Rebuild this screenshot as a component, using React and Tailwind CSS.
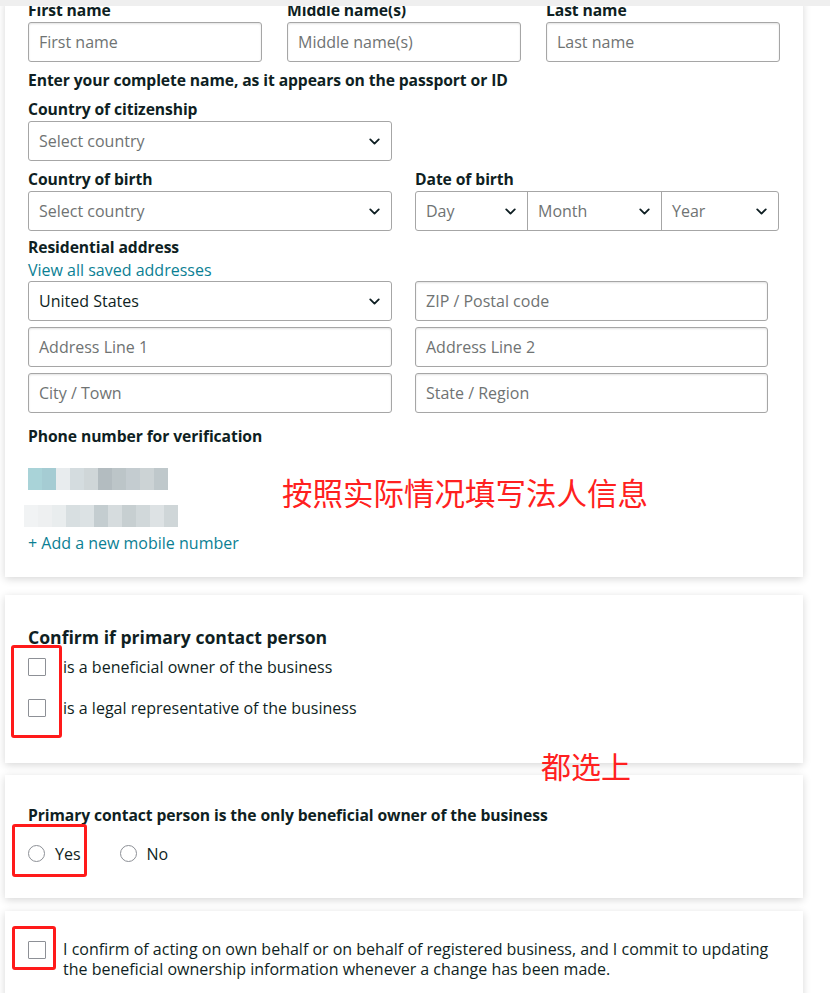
import { ChevronDown } from 'lucide-react';

const font = { fontFamily: '"Open Sans", "Noto Sans CJK SC", sans-serif' };

function Label({ children, className = '' }) {
  return <div className={`h-5 leading-5 text-[15.7px] font-bold text-[#0f1f23] tracking-[-0.1px] ${className}`}>{children}</div>;
}

function Input({ placeholder, className = '' }) {
  return (
    <div className={`h-10 rounded-[3px] border border-[#a6a6a6] shadow-[inset_0_1px_2px_rgba(15,17,17,0.12)] flex items-center pl-[10px] text-[16px] text-[#6f7373] ${className}`}>
      {placeholder}
    </div>
  );
}

function Select({ value, muted = true, className = '' }) {
  return (
    <div className={`h-10 rounded-[3px] border border-[#a6a6a6] flex items-center justify-between pl-[10px] pr-[8px] text-[16px] ${muted ? 'text-[#6f7373]' : 'text-[#0f1f23]'} ${className}`}>
      <span>{value}</span>
      <ChevronDown size={17} strokeWidth={2.6} className="text-[#0f1f23]" />
    </div>
  );
}

function Checkbox() {
  return <div className="w-[18px] h-[18px] border border-[#8d9096] rounded-[1px] bg-white shrink-0" />;
}

function Radio() {
  return <div className="w-[17px] h-[17px] border border-[#8d9096] rounded-full bg-white shrink-0" />;
}

function Blur({ cells }) {
  return (
    <div className="flex h-[22px] blur-[0.6px]">
      {cells.map((c, i) => (
        <div key={i} className="w-[14px] h-full" style={{ background: c }} />
      ))}
    </div>
  );
}

const card = 'ml-[5px] w-[798px] bg-white shadow-[0_2px_8px_rgba(0,0,0,0.16)] relative';
const cjk = { fontFamily: '"Noto Sans CJK SC", sans-serif' };

export default function App() {
  return (
    <div className="relative w-[831px] h-[993px] overflow-hidden bg-white" style={font}>
      <div className="absolute top-0 left-0 w-[830px] h-[6px] bg-[#efefef] z-10" />

      <div className={`${card} pl-[23px] pr-[24px] pb-6`}>
        <div className="grid grid-cols-[234px_234px_234px] gap-x-[25px]">
          <div>
            <Label>First name</Label>
            <Input placeholder="First name" className="mt-[2px]" />
          </div>
          <div>
            <Label>Middle name(s)</Label>
            <Input placeholder="Middle name(s)" className="mt-[2px]" />
          </div>
          <div>
            <Label>Last name</Label>
            <Input placeholder="Last name" className="mt-[2px]" />
          </div>
        </div>
        <Label className="mt-2">Enter your complete name, as it appears on the passport or ID</Label>
        <Label className="mt-[9px]">Country of citizenship</Label>
        <Select value="Select country" className="mt-[2px] w-[364px]" />

        <div className="mt-2 grid grid-cols-[364px_364px] gap-x-[23px]">
          <div>
            <Label>Country of birth</Label>
            <Select value="Select country" className="mt-[2px]" />
          </div>
          <div>
            <Label>Date of birth</Label>
            <div className="mt-[2px] h-10 rounded-[3px] border border-[#a6a6a6] flex text-[16px] text-[#6f7373]">
              <div className="w-[112px] flex items-center justify-between pl-[10px] pr-[8px] border-r border-[#a6a6a6]">
                <span>Day</span>
                <ChevronDown size={17} strokeWidth={2.6} className="text-[#0f1f23]" />
              </div>
              <div className="w-[134px] flex items-center justify-between pl-[10px] pr-[8px] border-r border-[#a6a6a6]">
                <span>Month</span>
                <ChevronDown size={17} strokeWidth={2.6} className="text-[#0f1f23]" />
              </div>
              <div className="flex-1 flex items-center justify-between pl-[10px] pr-[8px]">
                <span>Year</span>
                <ChevronDown size={17} strokeWidth={2.6} className="text-[#0f1f23]" />
              </div>
            </div>
          </div>
        </div>

        <Label className="mt-[6px]">Residential address</Label>
        <div className="mt-[3px] h-5 leading-5 text-[16px] text-[#0b7f94]">View all saved addresses</div>
        <div className="mt-px grid grid-cols-[364px_353px] gap-x-[23px] gap-y-[6px]">
          <Select value="United States" muted={false} />
          <Input placeholder="ZIP / Postal code" />
          <Input placeholder="Address Line 1" />
          <Input placeholder="Address Line 2" />
          <Input placeholder="City / Town" />
          <Input placeholder="State / Region" />
        </div>

        <Label className="mt-[13px]">Phone number for verification</Label>
        <div className="mt-[22px] flex flex-col gap-[15px]">
          <Blur cells={['#a9d3d8', '#a5ccd3', '#e8ecee', '#d4dcdf', '#cfd6d8', '#b3bcc0', '#bcc5c8', '#c4ccd0', '#ccd3d5', '#bfc8cb']} />
          <div className="-ml-[4px]">
            <Blur cells={['#f1f3f4', '#eef0f1', '#e9edee', '#d8dfe1', '#dce2e4', '#c4cdd0', '#d6dcde', '#c7cfd1', '#d1d8da', '#dde2e4', '#cfd6d8']} />
          </div>
        </div>
        <div className="mt-[6px] h-5 leading-5 text-[16px] text-[#0b7f94]">+ Add a new mobile number</div>

        <div className="absolute left-[277px] top-[474px] text-[30.5px] leading-[36px] text-[#ff2020]" style={cjk}>
          按照实际情况填写法人信息
        </div>
      </div>

      <div className={`${card} mt-[18px] h-[168px] pl-[23px] pt-[30px]`}>
        <div className="h-6 leading-6 text-[17.6px] font-bold text-[#0f1f23]">Confirm if primary contact person</div>
        <div className="mt-[7px] flex items-center gap-[17px] h-[22px]">
          <Checkbox />
          <span className="text-[16px] text-[#0f1f23]">is a beneficial owner of the business</span>
        </div>
        <div className="mt-[19px] flex items-center gap-[17px] h-[22px]">
          <Checkbox />
          <span className="text-[16px] text-[#0f1f23]">is a legal representative of the business</span>
        </div>
        <div className="absolute left-[6px] top-[50px] w-[51px] h-[93px] border-[3px] border-[#ff1a1a] rounded-[3px]" />
      </div>

      <div className="absolute left-[541px] top-[747px] text-[30px] leading-[36px] text-[#ff2020] z-10" style={cjk}>
        都选上
      </div>

      <div className={`${card} mt-[12px] h-[123px] pl-[23px] pt-[30px]`}>
        <Label>Primary contact person is the only beneficial owner of the business</Label>
        <div className="mt-[20px] flex items-center h-[17px]">
          <Radio />
          <span className="ml-[10px] text-[16px] text-[#0f1f23]">Yes</span>
          <div className="ml-[39px]"><Radio /></div>
          <span className="ml-[10px] text-[16px] text-[#0f1f23]">No</span>
        </div>
        <div className="absolute left-[7px] top-[49px] w-[75px] h-[53px] border-[3px] border-[#ff1a1a] rounded-[3px]" />
      </div>

      <div className={`${card} mt-[13px] h-[110px] pl-[23px] pt-[30px]`}>
        <div className="flex gap-[17px]">
          <Checkbox />
          <p className="text-[16px] leading-[20px] text-[#0f1f23] -mt-[2px] whitespace-nowrap">
            I confirm of acting on own behalf or on behalf of registered business, and I commit to updating
            <br />
            the beneficial ownership information whenever a change has been made.
          </p>
        </div>
        <div className="absolute left-[7px] top-[15px] w-[44px] h-[44px] border-[3px] border-[#ff1a1a] rounded-[3px]" />
      </div>
    </div>
  );
}
